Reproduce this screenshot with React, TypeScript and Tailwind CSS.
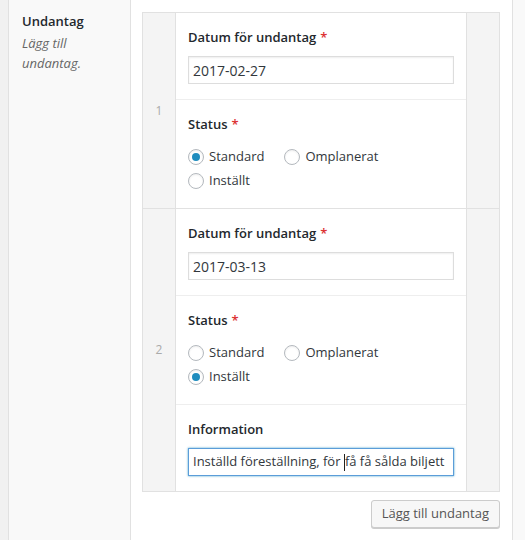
import React from "react";

const font = { fontFamily: '"Open Sans", "Noto Sans", Arial, sans-serif' };

function Radio({ label, checked }: { label: string; checked?: boolean }) {
	return (
		<label className="flex items-center mr-[20px] h-[24px] text-[13px] text-[#32373c]">
			<span className="w-[16px] h-[16px] rounded-full border border-[#b4b9be] bg-white shadow-[inset_0_1px_2px_rgba(0,0,0,0.07)] flex items-center justify-center mr-[5px]">
				{checked && <span className="w-[8px] h-[8px] rounded-full bg-[#1e8cbe]" />}
			</span>
			{label}
		</label>
	);
}

function FieldLabel({ text, required }: { text: string; required?: boolean }) {
	return (
		<div className="text-[13px] font-semibold text-[#23282d] leading-[18px] mb-[10px]">
			{text}
			{required && <span className="text-[#dc3232] ml-[4px]">*</span>}
		</div>
	);
}

function DateField({ value }: { value: string }) {
	return (
		<div className="px-[12px] pt-[15px] pb-[15px]">
			<FieldLabel text="Datum för undantag" required />
			<div className="h-[28px] border border-[#ddd] bg-white shadow-[inset_0_1px_2px_rgba(0,0,0,0.07)] flex items-center px-[4px] text-[14px] text-[#32373c]">
				{value}
			</div>
		</div>
	);
}

function StatusField({ selected }: { selected: number }) {
	const opts = ["Standard", "Omplanerat", "Inställt"];
	return (
		<div className="px-[12px] pt-[15px] pb-[15px] border-t border-[#eee]">
			<FieldLabel text="Status" required />
			<div className="pt-[2px] w-[230px] flex flex-wrap">
				{opts.map((o, i) => (
					<Radio key={o} label={o} checked={i === selected} />
				))}
			</div>
		</div>
	);
}

function Row({ n, children, last }: { n: number; children: React.ReactNode; last?: boolean }) {
	return (
		<div className={`flex ${last ? "" : "border-b border-[#e1e1e1]"}`}>
			<div className="w-[33px] shrink-0 bg-[#f4f4f4] border-r border-[#e1e1e1] flex items-center justify-center text-[12px] text-[#aaa]">
				{n}
			</div>
			<div className="flex-1 min-w-0 bg-white">{children}</div>
			<div className="w-[33px] shrink-0 bg-[#f4f4f4] border-l border-[#e1e1e1]" />
		</div>
	);
}

export default function App() {
	return (
		<div className="flex h-[540px] w-[525px] bg-[#f1f1f1] overflow-hidden" style={font}>
			<div className="w-[8px] shrink-0" />
			<div className="flex border-x border-[#e1e1e1] w-[505px] shrink-0">
				{/* label column */}
				<div className="w-[122px] shrink-0 bg-[#f9f9f9] border-r border-[#e1e1e1] pl-[13px] pr-[20px] pt-[12px]">
					<div className="text-[13px] font-semibold text-[#23282d] leading-[18px]">Undantag</div>
					<div className="text-[13px] italic text-[#666] leading-[20px] mt-[3px]">Lägg till undantag.</div>
				</div>

				{/* repeater */}
				<div className="flex-1 min-w-0 bg-white pt-[12px] pl-[11px] pr-[12px]">
					<div className="border border-[#e1e1e1]">
						<Row n={1}>
							<DateField value="2017-02-27" />
							<StatusField selected={0} />
						</Row>
						<Row n={2} last>
							<DateField value="2017-03-13" />
							<StatusField selected={2} />
							<div className="px-[12px] pt-[15px] pb-[15px] border-t border-[#eee]">
								<FieldLabel text="Information" />
								<div className="h-[28px] border border-[#5b9dd9] bg-white shadow-[0_0_2px_rgba(30,140,190,0.8)] flex items-center px-[4px] text-[13px] text-[#32373c] overflow-hidden whitespace-nowrap">
									<span>Inställd föreställning, för&nbsp;</span>
									<span className="inline-block w-[1px] h-[17px] bg-[#222]" />
									<span>få få sålda biljett</span>
								</div>
							</div>
						</Row>
					</div>
					<div className="flex justify-end mt-[8px]">
						<button
							type="button"
							className="h-[28px] px-[10px] rounded-[3px] border border-[#ccc] bg-[#f7f7f7] text-[#555] text-[13px] shadow-[0_1px_0_#ccc]"
						>
							Lägg till undantag
						</button>
					</div>
				</div>
			</div>
			<div className="flex-1 bg-[#f9f9f9]" />
		</div>
	);
}
